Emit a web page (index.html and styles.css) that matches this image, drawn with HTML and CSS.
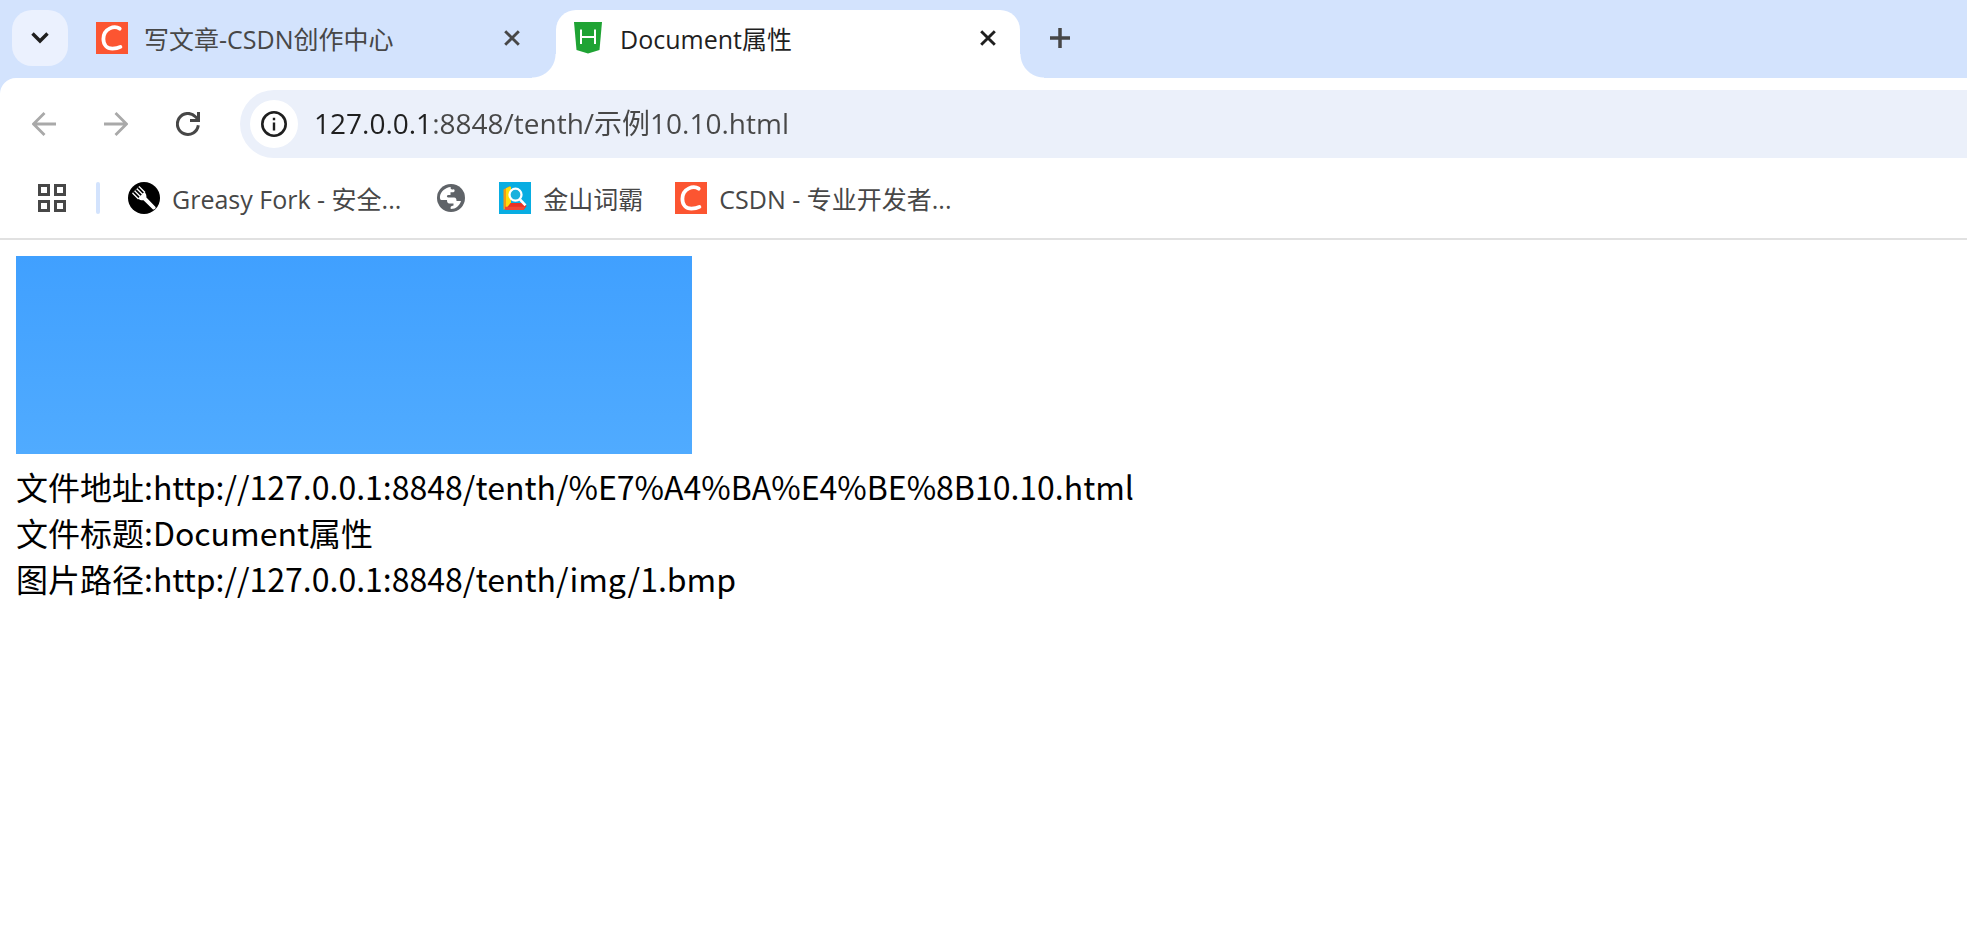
FILE: index.html
```html
<!DOCTYPE html>
<html lang="zh-CN">
<head>
<meta charset="utf-8">
<title>Document属性</title>
<link rel="stylesheet" href="styles.css">
</head>
<body>
<svg class="defs" aria-hidden="true">
  <symbol id="csdn" viewBox="0 0 32 32">
    <rect width="32" height="32" fill="#fc5531"/>
    <path d="M23.700 6.700C21 4.900 17.200 4.800 13.900 6.400C9.700 8.400 7.400 12.500 7.400 17C7.400 22.800 10.900 26.600 16.400 26.600C19.600 26.600 22.400 26 24.400 24.900" fill="none" stroke="#fff" stroke-width="3.800" stroke-linecap="round"/>
  </symbol>
  <symbol id="cross" viewBox="0 0 16 16">
    <path d="M1.200 1.200L14.800 14.800M14.800 1.200L1.200 14.800" fill="none" stroke="currentColor" stroke-width="2.900"/>
  </symbol>
</svg>

<header class="browser">
  <div class="tabstrip">
    <button class="tab-search" type="button" aria-label="搜索标签页">
      <svg width="18" height="12" viewBox="0 0 18 12"><path d="M1.500 1.500L9 9L16.500 1.500" fill="none" stroke="#1f1f1f" stroke-width="3.400"/></svg>
    </button>
    <div class="tab">
      <svg class="favicon"><use href="#csdn"/></svg>
      <span class="label tab-title">写文章-CSDN创作中心</span>
      <button class="tab-close" type="button" aria-label="关闭"><svg width="16" height="16"><use href="#cross"/></svg></button>
    </div>
    <div class="tab tab-active">
      <svg class="favicon" viewBox="0 0 32 32">
        <path d="M2 0H30L27.500 28L16 31.500L4.500 28Z" fill="#1fa334"/>
        <path d="M9 7.500V22M23 7.500V22M9 15H23" fill="none" stroke="#fff" stroke-width="2"/>
      </svg>
      <span class="label tab-title">Document属性</span>
      <button class="tab-close" type="button" aria-label="关闭"><svg width="16" height="16"><use href="#cross"/></svg></button>
    </div>
    <button class="new-tab" type="button" aria-label="打开新的标签页">
      <svg width="20" height="20" viewBox="0 0 20 20"><path d="M10 0V20M0 10H20" stroke="#474747" stroke-width="3.500"/></svg>
    </button>
  </div>

  <div class="toolbar">
    <div class="nav">
      <button type="button" aria-label="后退" disabled><svg width="24" height="24" viewBox="0 0 24 24"><path d="M24 12H2M12.500 1L1.500 12L12.500 23" fill="none" stroke="#a9a9a9" stroke-width="2.800"/></svg></button>
      <button type="button" aria-label="前进" disabled><svg width="24" height="24" viewBox="0 0 24 24"><path d="M0 12H22M11.500 1L22.500 12L11.500 23" fill="none" stroke="#a9a9a9" stroke-width="2.800"/></svg></button>
      <button type="button" aria-label="重新加载"><svg width="24" height="24" viewBox="0 0 24 24"><path d="M22.300 13.300A10.500 10.500 0 1 1 19.500 4.700L22 7.200M22.500 0V8.500H14" fill="none" stroke="#474747" stroke-width="3"/></svg></button>
    </div>
    <div class="omnibox">
      <button class="site-info" type="button" aria-label="查看网站信息">
        <svg width="26" height="26" viewBox="0 0 26 26"><circle cx="13" cy="13" r="11.700" fill="none" stroke="#1f1f1f" stroke-width="2.600"/><path d="M11.800 11.500H14.200V19.500H11.800ZM11.800 6.700H14.200V9.200H11.800Z" fill="#1f1f1f"/></svg>
      </button>
      <input class="url" type="text" aria-label="地址栏" value="127.0.0.1:8848/tenth/示例10.10.html">
    </div>
  </div>

  <nav class="bookmarks" aria-label="书签栏">
    <button class="apps" type="button" aria-label="应用">
      <svg width="28" height="28" viewBox="0 0 28 28"><path d="M1.500 1.500H10.500V10.500H1.500ZM17.500 1.500H26.500V10.500H17.500ZM1.500 17.500H10.500V26.500H1.500ZM17.500 17.500H26.500V26.500H17.500Z" fill="none" stroke="#474747" stroke-width="3"/></svg>
    </button>
    <span class="divider"></span>
    <a class="bookmark" href="#">
      <svg class="favicon" viewBox="0 0 32 32">
        <circle cx="16" cy="16" r="16" fill="#000"/>
        <path d="M4.500 11L10 16.500C11.500 18 13.500 18.500 15.500 18.300L25 27.500C26.500 28 28 26.500 27.600 25L18.400 15.500C18.600 13.500 18 11.600 16.500 10L11 4.500" fill="#fff"/>
        <path d="M4.500 11L10.500 17M6.700 8.800L13 15M8.900 6.700L15 13M11 4.500L17 10.500" stroke="#fff" stroke-width="1.300"/>
        <path d="M5.600 9.900L11 15.300M7.800 7.800L13.200 13.200M10 5.600L15.300 11" stroke="#000" stroke-width="1.700"/>
      </svg>
      <span class="label">Greasy Fork - 安全...</span>
    </a>
    <a class="bookmark" href="#" aria-label="网站">
      <svg class="globe" width="28" height="28" viewBox="0 0 28 28">
        <circle cx="14" cy="14" r="14" fill="#5f6368"/>
        <path d="M3 12C4 7.500 8 3.500 13.800 3C13 5 14.500 6 16.500 5.300C18 5.300 18 8 16.300 8.300H13.500V11H11C9.500 11 9.500 13.500 11 13.500H17C19 13.500 19.500 15 19.500 17H24C22.500 21.500 19 25 13.800 25C13 23 14 21.800 16.500 21.500V19.500H12.500C10.500 19.500 10 18 10 16H4.500C3 16 2.800 14 3 12Z" fill="#fff"/>
      </svg>
    </a>
    <a class="bookmark" href="#">
      <svg class="favicon" viewBox="0 0 32 32">
        <rect width="32" height="32" fill="#08ade2"/>
        <path d="M4.500 7.500L11 4V23L4.500 28Z" fill="#f59b12"/>
        <path d="M7 6.300L12 4.500V23L7 27Z" fill="#ffdc0a"/>
        <path d="M11.500 21H25.500L27.500 24L24.500 28H6Z" fill="#e93224"/>
        <path d="M6 24.800H26L24.500 28H6Z" fill="#f04935"/>
        <path d="M21 17.500L26.500 23.300" stroke="#fff" stroke-width="2.600"/>
        <circle cx="16.500" cy="12.700" r="6" fill="#19b1dd" stroke="#fff" stroke-width="2.300"/>
      </svg>
      <span class="label">金山词霸</span>
    </a>
    <a class="bookmark" href="#">
      <svg class="favicon"><use href="#csdn"/></svg>
      <span class="label">CSDN - 专业开发者...</span>
    </a>
  </nav>
</header>

<main class="page">
  <div class="picture" role="img" aria-label="1.bmp"></div>
  <p>文件地址:http://127.0.0.1:8848/tenth/%E7%A4%BA%E4%BE%8B10.10.html</p>
  <p>文件标题:Document属性</p>
  <p>图片路径:http://127.0.0.1:8848/tenth/img/1.bmp</p>
</main>
</body>
</html>
```
FILE: styles.css
```css
* {
  box-sizing: border-box;
}

body {
  margin: 0;
  background: #fff;
  font-family: "Open Sans", "Noto Sans CJK SC", sans-serif;
  font-size: 25px;
  line-height: 32px;
  color: #474747;
  overflow-x: hidden;
}

svg {
  display: block;
  flex: none;
}

button {
  display: flex;
  align-items: center;
  justify-content: center;
  flex: none;
  padding: 0;
  border: 0;
  background: none;
  color: inherit;
}

.defs {
  display: none;
}

.favicon {
  width: 32px;
  height: 32px;
}

.label {
  padding-top: 2px;
  white-space: nowrap;
}

.browser {
  background: #d3e3fd;
  border-bottom: 2px solid #e1e1e1;
}

.tabstrip {
  display: flex;
  padding: 10px 12px 0;
}

.tab-search {
  width: 56px;
  height: 56px;
  border-radius: 20px;
  background: #ebf1fe;
}

.tab {
  display: flex;
  flex: 0 1 488px;
  height: 68px;
  padding: 0 36px 12px 28px;
  align-items: center;
  gap: 16px;
}

.tab-title {
  flex: 1;
}

.tab-close {
  width: 16px;
  height: 32px;
}

.tab-active {
  position: relative;
  flex-basis: 464px;
  padding: 0 24px 12px 16px;
  background: #fff;
  border-radius: 20px 20px 0 0;
  color: #1f1f1f;
}

.tab-active::before,
.tab-active::after {
  content: "";
  position: absolute;
  bottom: 0;
  width: 24px;
  height: 24px;
}

.tab-active::before {
  right: 100%;
  background: radial-gradient(circle at 0 0, transparent 23px, #fff 24px);
}

.tab-active::after {
  left: 100%;
  background: radial-gradient(circle at 100% 0, transparent 23px, #fff 24px);
}

.new-tab {
  width: 56px;
  height: 56px;
  margin-left: 12px;
}

.toolbar {
  display: flex;
  gap: 16px;
  padding: 12px 0 0 8px;
  background: #fff;
  border-top-left-radius: 16px;
}

.nav {
  display: flex;
}

.nav button {
  width: 72px;
  height: 68px;
}

.omnibox {
  display: flex;
  flex: 1;
  align-items: center;
  gap: 16px;
  height: 68px;
  padding-left: 10px;
  border-radius: 34px 0 0 34px;
  background: #ebf0fa;
}

.site-info {
  width: 48px;
  height: 48px;
  border-radius: 50%;
  background: #fff;
}

.url {
  flex: 1;
  min-width: 0;
  height: 48px;
  padding: 0 0 4px;
  border: 0;
  outline: 0;
  font: inherit;
  font-size: 28px;
  background: linear-gradient(to right, #1f1f1f 117px, #474747 117px);
  background-clip: text;
  -webkit-background-clip: text;
  color: transparent;
  caret-color: #1f1f1f;
}

.bookmarks {
  display: flex;
  align-items: center;
  height: 80px;
  padding-left: 38px;
  background: #fff;
}

.apps {
  width: 28px;
  height: 32px;
}

.divider {
  width: 4px;
  height: 32px;
  margin: 0 28px 0 30px;
  border-radius: 2px;
  background: #d3e3fd;
}

.bookmark {
  display: flex;
  align-items: center;
  gap: 12px;
  margin-right: 32px;
  color: inherit;
  text-decoration: none;
}

.globe {
  margin: 0 2px 0 4px;
}

.page {
  padding: 16px;
  font-family: "Noto Sans CJK SC", sans-serif;
  font-size: 32px;
  line-height: 46px;
  color: #000;
}

.page p {
  margin: 0;
}

.picture {
  width: 676px;
  max-width: 100%;
  height: 198px;
  margin-bottom: 9px;
  background: linear-gradient(#40a0ff, #50abff);
}
```
